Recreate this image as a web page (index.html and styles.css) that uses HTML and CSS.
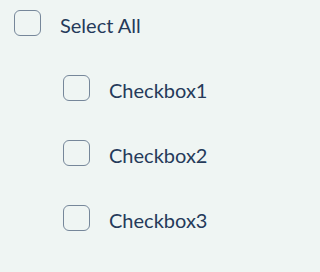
FILE: index.html
```html
<!DOCTYPE html>
<html>
<head>
<meta charset="utf-8">
<link rel="stylesheet" href="styles.css">
</head>
<body>
<div class="list">
  <label class="row">
    <span class="box"></span>
    <span class="label">Select All</span>
  </label>
  <div class="children">
    <label class="row">
      <span class="box"></span>
      <span class="label">Checkbox1</span>
    </label>
    <label class="row">
      <span class="box"></span>
      <span class="label">Checkbox2</span>
    </label>
    <label class="row">
      <span class="box"></span>
      <span class="label">Checkbox3</span>
    </label>
  </div>
</div>
</body>
</html>
```

FILE: styles.css
```css
html, body {
  margin: 0;
  padding: 0;
  background: #eff5f3;
}
body {
  font-family: "Lato", "Noto Sans", sans-serif;
  color: #253a5a;
  width: 304px;
  height: 272px;
  overflow: hidden;
}
.list {
  display: flex;
  flex-direction: column;
  gap: 39px;
  padding: 10px 0 0 14px;
}
.children {
  display: flex;
  flex-direction: column;
  gap: 39px;
  padding-left: 49px;
}
.row {
  display: flex;
  align-items: center;
  gap: 19px;
  height: 26px;
}
.box {
  box-sizing: border-box;
  width: 27px;
  height: 26px;
  border: 1.5px solid #76879a;
  border-radius: 6px;
  flex: none;
}
.label {
  font-size: 20px;
  line-height: 22px;
  padding-top: 4px;
}
```
